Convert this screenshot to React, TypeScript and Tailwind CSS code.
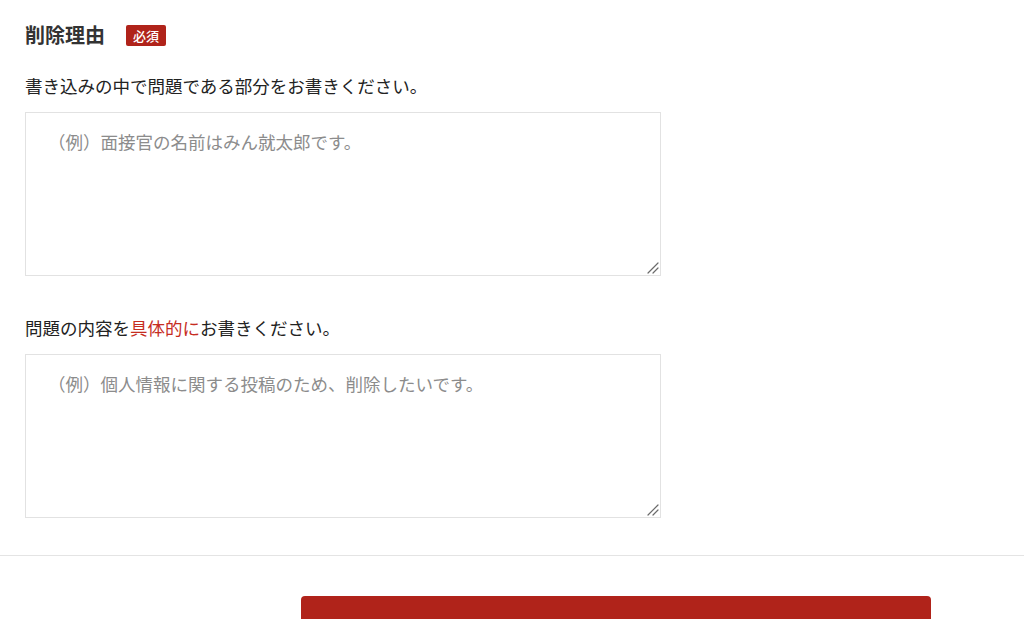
function Grip() {
    return (
        <svg
            aria-hidden
            className="pointer-events-none absolute right-[2px] bottom-[2px]"
            width="12"
            height="12"
            viewBox="0 0 12 12"
        >
            <path d="M11 1 L1 11 M11 6 L6 11" stroke="#6b6b6b" strokeWidth="1.2" strokeLinecap="round" />
        </svg>
    );
}

function Field({placeholder}: {placeholder: string}) {
    return (
        <div className="relative w-[636px]">
            <textarea
                className="block h-[164px] w-full resize-none border border-[#e2e2e2] pl-[22px] pr-4 pt-[17px] text-[17.5px] leading-6 outline-none placeholder:text-[#8c8c8c]"
                placeholder={placeholder}
            />
            <Grip/>
        </div>
    );
}

export default function App() {
    return (
        <div className="min-h-[619px] bg-white text-[#222] font-['Noto_Sans_CJK_JP','Noto_Sans',sans-serif]">
            <section className="pl-[25px] pt-[21px]">
                <div className="flex h-7 items-center">
                    <h2 className="text-[20px] font-bold leading-7 text-[#333]">削除理由</h2>
                    <span className="ml-[21px] rounded-[2px] bg-[#b0231a] px-[7px] text-[13px] leading-[21px] font-medium text-white">
                        必須
                    </span>
                </div>

                <p className="mt-[25px] text-[17.5px] leading-6">
                    書き込みの中で問題である部分をお書きください。
                </p>
                <div className="mt-[14px]">
                    <Field placeholder="（例）面接官の名前はみん就太郎です。"/>
                </div>

                <p className="mt-[40px] text-[17.5px] leading-6">
                    問題の内容を<span className="text-[#c62d1f]">具体的に</span>お書きください。
                </p>
                <div className="mt-[14px]">
                    <Field placeholder="（例）個人情報に関する投稿のため、削除したいです。"/>
                </div>
            </section>

            <div className="mt-[37px] border-t border-[#e4e4e4] pt-[40px]">
                <div className="ml-[301px] h-[60px] w-[630px] rounded-[4px] bg-[#b0231a]"/>
            </div>
        </div>
    );
}
